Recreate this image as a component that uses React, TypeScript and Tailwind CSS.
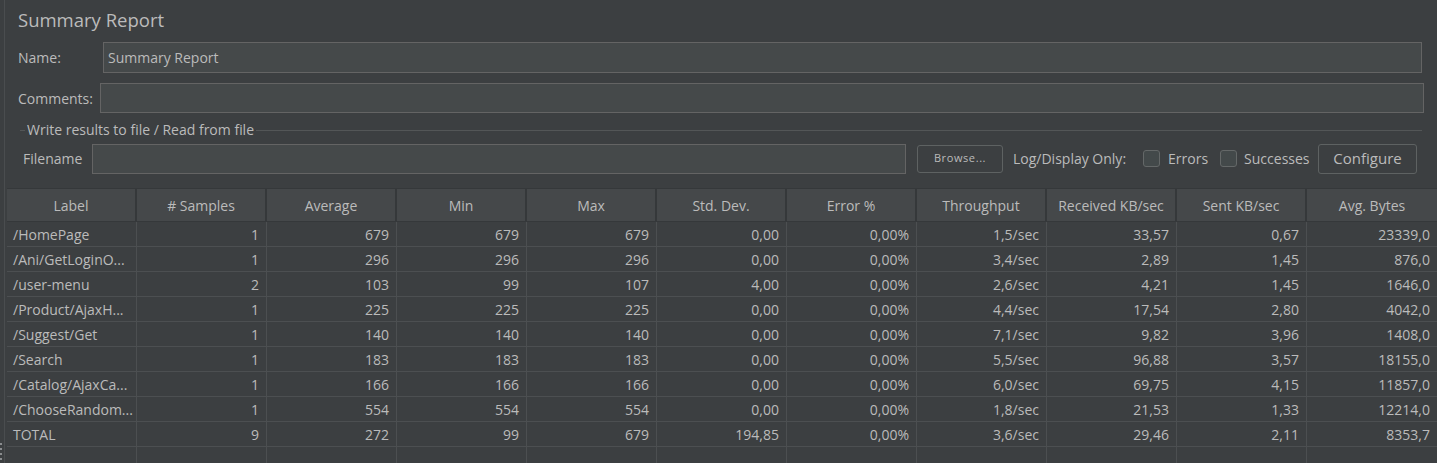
import React from "react";

const headers = ["Label", "# Samples", "Average", "Min", "Max", "Std. Dev.", "Error %", "Throughput", "Received KB/sec", "Sent KB/sec", "Avg. Bytes"];

const rows: string[][] = [
  ["/HomePage", "1", "679", "679", "679", "0,00", "0,00%", "1,5/sec", "33,57", "0,67", "23339,0"],
  ["/Ani/GetLoginO...", "1", "296", "296", "296", "0,00", "0,00%", "3,4/sec", "2,89", "1,45", "876,0"],
  ["/user-menu", "2", "103", "99", "107", "4,00", "0,00%", "2,6/sec", "4,21", "1,45", "1646,0"],
  ["/Product/AjaxH...", "1", "225", "225", "225", "0,00", "0,00%", "4,4/sec", "17,54", "2,80", "4042,0"],
  ["/Suggest/Get", "1", "140", "140", "140", "0,00", "0,00%", "7,1/sec", "9,82", "3,96", "1408,0"],
  ["/Search", "1", "183", "183", "183", "0,00", "0,00%", "5,5/sec", "96,88", "3,57", "18155,0"],
  ["/Catalog/AjaxCa...", "1", "166", "166", "166", "0,00", "0,00%", "6,0/sec", "69,75", "4,15", "11857,0"],
  ["/ChooseRandom...", "1", "554", "554", "554", "0,00", "0,00%", "1,8/sec", "21,53", "1,33", "12214,0"],
  ["TOTAL", "9", "272", "99", "679", "194,85", "0,00%", "3,6/sec", "29,46", "2,11", "8353,7"],
];

function Checkbox() {
  return <div className="w-[17px] h-[17px] rounded-[3px] border border-[#646868] bg-[#43494a]" />;
}

export default function App() {
  return (
    <div
      className="relative w-[1437px] h-[463px] overflow-hidden bg-[#3c3f41] text-[#bbbbbb] flex"
      style={{ fontFamily: '"Open Sans", "Noto Sans", sans-serif' }}
    >
      <div className="w-[4px] shrink-0" />
      <div className="flex-1 border-l border-[#4a4d4f] flex flex-col min-w-0">
        <div className="pl-[13px] pt-[6px] h-[40px] text-[18.5px] leading-[28px]">Summary Report</div>

        <div className="flex items-center h-[31px] mt-[2px] pl-[13px] pr-[15px]">
          <div className="w-[85px] text-[14px]">Name:</div>
          <div className="flex-1 h-[31px] bg-[#45494a] border border-[#646464] flex items-center pl-[4px] text-[14px]">
            Summary Report
          </div>
        </div>

        <div className="flex items-center h-[30px] mt-[10px] pl-[13px] pr-[13px]">
          <div className="w-[82px] text-[14px]">Comments:</div>
          <div className="flex-1 h-[30px] bg-[#45494a] border border-[#646464]" />
        </div>

        <div className="relative mt-[9px] ml-[15px] mr-[15px] h-[20px]">
          <div className="absolute left-0 right-0 top-[8px] border-t border-[#535657]" />
          <div className="absolute left-[5px] top-[-2px] bg-[#3c3f41] px-[2px] text-[14px] leading-[20px]">
            Write results to file / Read from file
          </div>
        </div>

        <div className="flex items-center h-[31px] mt-[1px] pl-[18px] text-[14px]">
          <div className="w-[69px]">Filename</div>
          <div className="w-[814px] h-[30px] bg-[#45494a] border border-[#646464]" />
          <div className="ml-[11px] w-[86px] h-[28px] rounded-[3px] border border-[#5e6262] flex items-center justify-center text-[11px] tracking-[0.6px]">
            Browse...
          </div>
          <div className="ml-[10px]">Log/Display Only:</div>
          <div className="ml-[17px]"><Checkbox /></div>
          <div className="ml-[8px]">Errors</div>
          <div className="ml-[12px]"><Checkbox /></div>
          <div className="ml-[7px]">Successes</div>
          <div className="ml-auto mr-[20px] w-[99px] h-[30px] rounded-[3px] border border-[#5e6262] flex items-center justify-center text-[15px]">
            Configure
          </div>
        </div>

        <div className="ml-[2px] mt-[14px] flex-1 flex flex-col">
          <div className="grid grid-cols-[repeat(11,130px)] h-[34px] bg-[#45484a] border-t border-[#35383a] border-b border-b-[#35383a]">
            {headers.map((h, i) => (
              <div
                key={h}
                className={`flex items-center justify-center text-[14px] ${i < 10 ? "border-r-2 border-[#35383a]" : ""}`}
              >
                {h}
              </div>
            ))}
          </div>
          {rows.map((r, ri) => (
            <div key={ri} className="grid grid-cols-[repeat(11,130px)] h-[25px] border-b border-[#4c4f51]">
              {r.map((c, ci) => (
                <div
                  key={ci}
                  className={`flex items-center text-[14px] whitespace-nowrap overflow-hidden ${
                    ci === 0 ? "justify-start pl-[6px]" : "justify-end pr-[7px]"
                  } ${ci < 10 ? "border-r border-[#4c4f51]" : ""}`}
                >
                  {c}
                </div>
              ))}
            </div>
          ))}
          <div className="grid grid-cols-[repeat(11,130px)] flex-1">
            {headers.map((h, i) => (
              <div key={h} className={i < 10 ? "border-r border-[#4c4f51]" : ""} />
            ))}
          </div>
        </div>
      </div>
      <div className="absolute left-0 top-[443px] flex flex-col gap-[3px]">
        {[0, 1, 2, 3].map((i) => (
          <div key={i} className="w-[2px] h-[2px] bg-[#8a8d8f]" />
        ))}
      </div>
    </div>
  );
}
